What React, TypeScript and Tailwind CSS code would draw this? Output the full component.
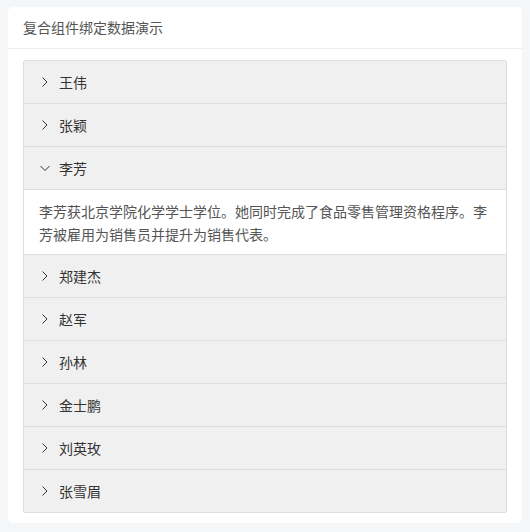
import React, { useState } from 'react';

const people = [
    { name: '王伟', note: '王伟拥有北京大学经济学学士学位。' },
    { name: '张颖', note: '张颖拥有北京大学心理学学士学位。' },
    { name: '李芳', note: '李芳获北京学院化学学士学位。她同时完成了食品零售管理资格程序。李芳被雇用为销售员并提升为销售代表。' },
    { name: '郑建杰', note: '' },
    { name: '赵军', note: '' },
    { name: '孙林', note: '' },
    { name: '金士鹏', note: '' },
    { name: '刘英玫', note: '' },
    { name: '张雪眉', note: '' },
];

const Chevron = ({ open }: { open: boolean }) => (
    <svg width="10" height="10" viewBox="0 0 10 10" fill="none" className="shrink-0">
        {open ? (
            <path d="M0.5 3L5 7.5L9.5 3" stroke="#333" strokeWidth="1" />
        ) : (
            <path d="M2.5 0.5L7 5L2.5 9.5" stroke="#333" strokeWidth="1" />
        )}
    </svg>
);

const App = () => {
    const [openIdx, setOpenIdx] = useState(2);

    return (
        <div
            className="min-h-[532px] bg-[#f5f6f8] px-2 pt-[7px] pb-[9px]"
            style={{ fontFamily: '"Noto Sans CJK SC", "Noto Sans", sans-serif' }}
        >
            <div className="bg-white rounded-[5px]">
                <div className="h-[42px] flex items-center px-[15px] text-[14px] text-[#555] border-b border-[#eeeeee]">
                    复合组件绑定数据演示
                </div>
                <div className="px-[15px] pt-[11px] pb-[10px]">
                    <div className="border border-[#dddddd] rounded-[2px]">
                        {people.map((p, i) => {
                            const open = i === openIdx;
                            return (
                                <div key={p.name} className={i > 0 ? 'border-t border-[#dddddd]' : ''}>
                                    <button
                                        onClick={() => setOpenIdx(open ? -1 : i)}
                                        className="w-full h-[42px] flex items-center gap-[9px] pl-[16px] bg-[#f0f0f0] text-[14px] text-[#333] text-left"
                                    >
                                        <Chevron open={open} />
                                        <span>{p.name}</span>
                                    </button>
                                    {open && (
                                        <div className="border-t border-[#dddddd] bg-white px-[15px] pt-[10px] pb-[8px] text-[14px] leading-[23px] text-[#555]">
                                            {p.note}
                                        </div>
                                    )}
                                </div>
                            );
                        })}
                    </div>
                </div>
            </div>
        </div>
    );
};

export default App;
